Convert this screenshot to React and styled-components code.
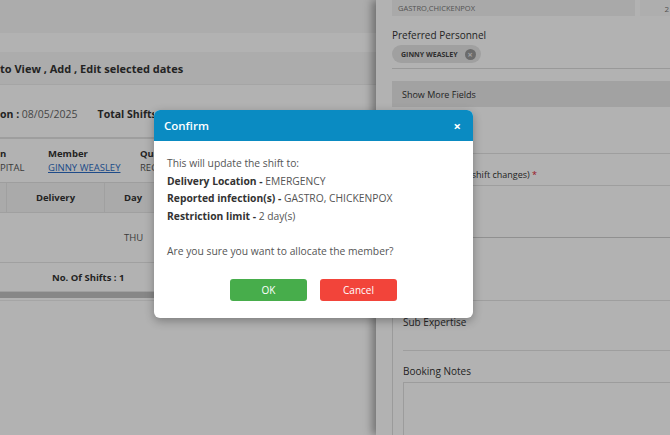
import styled, { createGlobalStyle } from "styled-components";

const GlobalStyle = createGlobalStyle`
  * { box-sizing: border-box; }
  html, body { margin: 0; padding: 0; }
  body {
    width: 670px;
    height: 435px;
    overflow: hidden;
    font-family: "Open Sans", "Noto Sans", sans-serif;
    color: #333;
    background: #fff;
  }
`;

const Screen = styled.div`
  position: relative;
  display: flex;
  width: 670px;
  height: 435px;
  overflow: hidden;
`;

/* ---------- left page ---------- */

const Page = styled.div`
  width: 376px;
  flex-shrink: 0;
  display: flex;
  flex-direction: column;
  background: #fff;
`;

const TopBar = styled.div`
  height: 33px;
  background: #f6f6f6;
`;

const Gap = styled.div`
  height: ${(p) => p.h}px;
  background: ${(p) => p.bg || "#fff"};
`;

const SectionTitle = styled.div`
  height: 33px;
  display: flex;
  align-items: center;
  background: #f6f6f6;
  border-bottom: 1px solid #ededed;
  font-size: 11px;
  font-weight: 700;
  color: #333;
`;

const InfoRow = styled.div`
  height: 53px;
  display: flex;
  align-items: center;
  gap: 20px;
  padding-top: 6px;
  font-size: 10.5px;
  border-bottom: 1px solid #e3e3e3;
  overflow: hidden;
  width: 154px;
  white-space: nowrap;
`;

const Bold = styled.b`
  font-weight: 700;
  color: #333;
`;

const Muted = styled.span`
  color: #666;
`;

const InfoWrap = styled.div`
  border-bottom: 1px solid #e3e3e3;
`;

const Details = styled.div`
  display: grid;
  grid-template-columns: 48px 92px 14px;
  padding: 8px 0 8px;
  font-size: 9.5px;
  white-space: nowrap;
`;

const DetailLabel = styled.div`
  font-weight: 700;
  color: #333;
  overflow: hidden;
`;

const DetailValue = styled.div`
  color: #555;
  overflow: hidden;
  padding-top: 1px;
`;

const MemberLink = styled.a`
  color: #2b6cc4;
  text-decoration: underline;
`;

const Table = styled.div`
  display: flex;
  flex-direction: column;
  border-top: 1px solid #e3e3e3;
`;

const TRow = styled.div`
  display: grid;
  grid-template-columns: 7px 98px 50px 1fr;
  height: ${(p) => p.h}px;
  background: ${(p) => p.bg || "#fff"};
  border-bottom: 1px solid #e6e6e6;
  font-size: 9.5px;
`;

const TCell = styled.div`
  display: flex;
  align-items: center;
  justify-content: ${(p) => (p.left ? "flex-start" : "center")};
  padding-left: ${(p) => (p.left ? 19 : 0)}px;
  border-right: ${(p) => (p.sep ? "1px solid #e6e6e6" : "none")};
  font-weight: ${(p) => (p.bold ? 700 : 400)};
  color: ${(p) => (p.bold ? "#333" : "#555")};
`;

const Footer = styled.div`
  height: 29px;
  display: flex;
  align-items: center;
  padding-left: 52px;
  font-size: 9.5px;
  font-weight: 700;
  color: #333;
  border-bottom: 1px solid #e6e6e6;
`;

const ScrollBar = styled.div`
  height: 6px;
  background: #c2c2c2;
`;

const PageRest = styled.div`
  flex: 1;
  border-top: 1px solid #ececec;
  margin-top: 2px;
  background: #fff;
`;

/* ---------- right drawer ---------- */

const Drawer = styled.div`
  flex: 1;
  background: #fff;
  box-shadow: -4px 0 8px rgba(0, 0, 0, 0.35);
  padding-left: 16px;
  display: flex;
  flex-direction: column;
  z-index: 1;
`;

const InputRow = styled.div`
  display: flex;
  gap: 5px;
  height: 16px;
`;

const ReadOnlyInput = styled.div`
  width: ${(p) => p.w}px;
  flex-shrink: 0;
  background: #f3f3f3;
  font-size: 7.5px;
  color: #777;
  padding: 0 6px;
  display: flex;
  align-items: center;
`;

const SideNumber = styled.div`
  flex: 1;
  display: flex;
  align-items: center;
  justify-content: flex-end;
  padding-right: 1px;
  font-size: 8px;
  color: #777;
  background: #fafafa;
`;

const FieldLabel = styled.div`
  font-size: 10px;
  color: #333;
  margin-top: ${(p) => p.mt || 0}px;
`;

const ChipRow = styled.div`
  display: flex;
  padding: 3px 0 5px;
  border-bottom: 1px solid #dcdcdc;
`;

const Chip = styled.div`
  display: flex;
  align-items: center;
  gap: 7px;
  height: 18px;
  padding: 0 5px 0 9px;
  border-radius: 9px;
  background: #e6e6e6;
  font-size: 7px;
  font-weight: 700;
  color: #444;
`;

const ChipClose = styled.span`
  width: 11px;
  height: 11px;
  border-radius: 50%;
  background: #9a9a9a;
  display: flex;
  align-items: center;
  justify-content: center;
  color: #e6e6e6;
  font-size: 9px;
  line-height: 1;
`;

const MoreBar = styled.div`
  margin-top: 12px;
  height: 26px;
  background: #e8e8e8;
  display: flex;
  align-items: center;
  padding-left: 10px;
  font-size: 9px;
  color: #333;
`;

const Divider = styled.div`
  margin-top: ${(p) => p.mt}px;
  border-top: 1px solid ${(p) => p.c || "#e3e3e3"};
`;

const HintLabel = styled.div`
  margin-top: 14px;
  padding-left: 10px;
  font-size: 9px;
  color: #333;
  span { color: #d23; }
`;

const Nested = styled.div`
  margin-top: 62px;
  flex: 1;
  border-left: 1px solid #dedede;
  border-top: 1px solid #e3e3e3;
  padding-left: 10px;
  display: flex;
  flex-direction: column;
`;

const NestedLabel = styled.div`
  font-size: 10px;
  color: #333;
  margin-top: ${(p) => p.mt}px;
`;

const NestedLine = styled.div`
  margin-top: 21px;
  border-top: 1px solid #e3e3e3;
`;

const TextArea = styled.div`
  margin-top: 4px;
  flex: 1;
  border: 1px solid #e0e0e0;
  border-right: none;
  border-bottom: none;
`;

/* ---------- modal ---------- */

const Backdrop = styled.div`
  position: absolute;
  inset: 0;
  background: rgba(0, 0, 0, 0.3);
  z-index: 5;
`;

const Modal = styled.div`
  position: absolute;
  left: 154px;
  top: 110px;
  width: 319px;
  height: 208px;
  background: #fff;
  border-radius: 6px;
  overflow: hidden;
  box-shadow: 0 3px 10px rgba(0, 0, 0, 0.3);
  z-index: 6;
  display: flex;
  flex-direction: column;
`;

const ModalHeader = styled.div`
  height: 31px;
  background: #0a8bc2;
  display: flex;
  align-items: center;
  justify-content: space-between;
  padding: 0 12px 0 10px;
  color: #fff;
  font-size: 11.5px;
  font-weight: 600;
`;

const CloseX = styled.span`
  font-size: 13px;
  font-weight: 700;
`;

const ModalBody = styled.div`
  padding: 14px 13px 0;
  display: flex;
  flex-direction: column;
  font-size: 10.3px;
  color: #555;
`;

const Line = styled.div`
  height: 17.5px;
  line-height: 17.5px;
  margin-top: ${(p) => p.mt || 0}px;
  b { font-weight: 700; color: #333; }
`;

const Actions = styled.div`
  display: flex;
  justify-content: center;
  gap: 13px;
  margin-top: 18px;
`;

const Button = styled.button`
  width: 77px;
  height: 22px;
  border: none;
  border-radius: 3px;
  background: ${(p) => p.bg};
  color: #fff;
  font-family: inherit;
  font-size: 10px;
  padding: 0;
`;

export default function App() {
  return (
    <>
      <GlobalStyle />
      <Screen>
        <Page>
          <TopBar />
          <Gap h={19} />
          <SectionTitle>to View , Add , Edit selected dates</SectionTitle>
          <InfoWrap>
            <InfoRow>
              <span>
                <Bold>on : </Bold>
                <Muted>08/05/2025</Muted>
              </span>
              <Bold>Total Shifts : 1</Bold>
            </InfoRow>
          </InfoWrap>
          <Details>
            <DetailLabel>n</DetailLabel>
            <DetailLabel>Member</DetailLabel>
            <DetailLabel>Qualification</DetailLabel>
            <DetailValue>PITAL</DetailValue>
            <DetailValue>
              <MemberLink>GINNY WEASLEY</MemberLink>
            </DetailValue>
            <DetailValue>REGISTERED</DetailValue>
          </Details>
          <Table>
            <TRow h={30} bg="#f4f4f4">
              <TCell sep />
              <TCell sep bold>Delivery</TCell>
              <TCell bold left>Day</TCell>
              <TCell />
            </TRow>
            <TRow h={50}>
              <TCell />
              <TCell />
              <TCell left>THU</TCell>
              <TCell />
            </TRow>
          </Table>
          <Footer>No. Of Shifts : 1</Footer>
          <ScrollBar />
          <PageRest />
        </Page>

        <Drawer>
          <InputRow>
            <ReadOnlyInput w={243}>GASTRO,CHICKENPOX</ReadOnlyInput>
            <SideNumber>2</SideNumber>
          </InputRow>
          <FieldLabel mt={12}>Preferred Personnel</FieldLabel>
          <ChipRow>
            <Chip>
              GINNY WEASLEY
              <ChipClose>×</ChipClose>
            </Chip>
          </ChipRow>
          <MoreBar>Show More Fields</MoreBar>
          <Divider mt={46} />
          <HintLabel>
            Change Reason (shift changes) <span>*</span>
          </HintLabel>
          <Divider mt={4} />
          <Divider mt={51} c="#cfcfcf" />
          <Nested>
            <NestedLabel mt={14}>Sub Expertise</NestedLabel>
            <NestedLine />
            <NestedLabel mt={13}>Booking Notes</NestedLabel>
            <TextArea />
          </Nested>
        </Drawer>

        <Backdrop />
        <Modal>
          <ModalHeader>
            Confirm
            <CloseX>×</CloseX>
          </ModalHeader>
          <ModalBody>
            <Line>This will update the shift to:</Line>
            <Line>
              <b>Delivery Location - </b>EMERGENCY
            </Line>
            <Line>
              <b>Reported infection(s) - </b>GASTRO, CHICKENPOX
            </Line>
            <Line>
              <b>Restriction limit - </b>2 day(s)
            </Line>
            <Line mt={18}>Are you sure you want to allocate the member?</Line>
            <Actions>
              <Button bg="#47ad4b">OK</Button>
              <Button bg="#f2443a">Cancel</Button>
            </Actions>
          </ModalBody>
        </Modal>
      </Screen>
    </>
  );
}
